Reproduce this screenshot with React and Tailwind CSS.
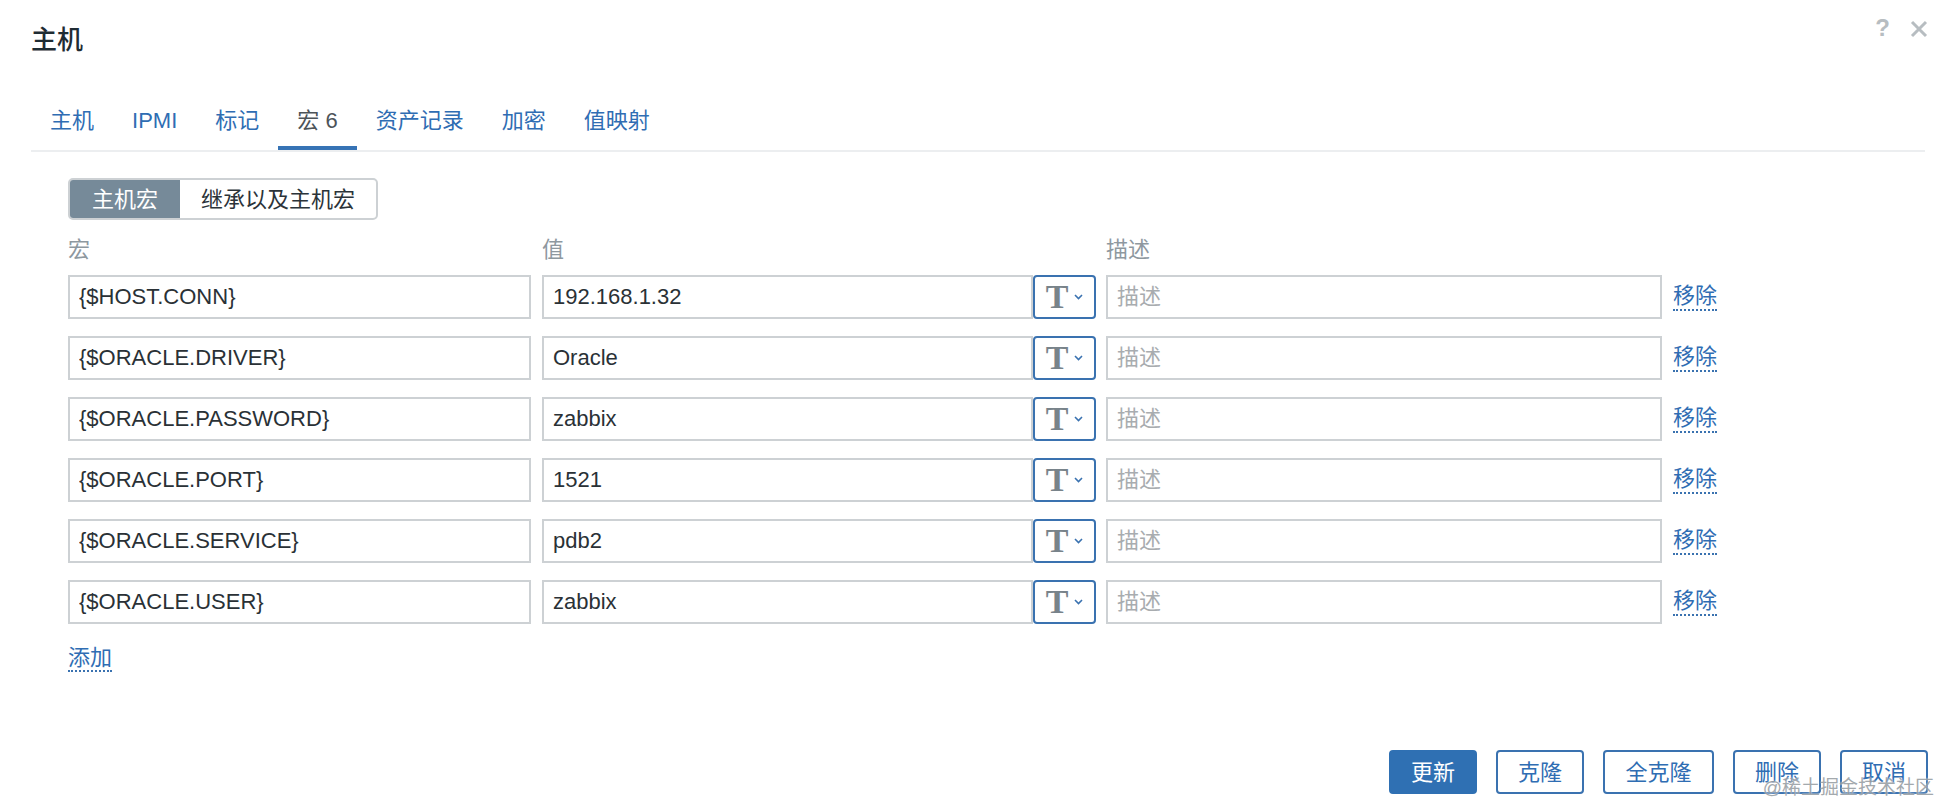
// Zabbix host edit dialog — macros tab
const tabs = [
  { label: "主机" },
  { label: "IPMI" },
  { label: "标记" },
  { label: "宏 6", active: true },
  { label: "资产记录" },
  { label: "加密" },
  { label: "值映射" },
];

const macros = [
  { name: "{$HOST.CONN}", value: "192.168.1.32" },
  { name: "{$ORACLE.DRIVER}", value: "Oracle" },
  { name: "{$ORACLE.PASSWORD}", value: "zabbix" },
  { name: "{$ORACLE.PORT}", value: "1521" },
  { name: "{$ORACLE.SERVICE}", value: "pdb2" },
  { name: "{$ORACLE.USER}", value: "zabbix" },
];

const buttons = [
  { label: "更新", primary: true, w: "w-[88px]" },
  { label: "克隆", w: "w-[88px]" },
  { label: "全克隆", w: "w-[111px]" },
  { label: "删除", w: "w-[88px]" },
  { label: "取消", w: "w-[88px]" },
];

const inputCls =
  "h-[44px] border-2 border-[#cdd1d4] bg-white px-[9px] text-[22px] text-[#2a3136] outline-none placeholder:text-[#a8acaf]";

const App = () => {
  return (
    <div className="relative min-h-screen bg-white font-['Liberation_Sans','Noto_Sans_CJK_SC',sans-serif] text-[#1f2c33]">
      {/* Header */}
      <div className="flex items-start justify-between pl-[31px] pr-[16px] pt-[25px]">
        <h1 className="text-[26px] font-medium leading-[30px]">主机</h1>
        <div className="-mt-[12px] flex items-center gap-[20px] text-[#b7bdc1]">
          <span className="text-[24px] font-bold leading-[30px]">?</span>
          <svg width="18" height="18" viewBox="0 0 18 18" className="mt-[2px]">
            <path d="M2 2 L16 16 M16 2 L2 16" stroke="#b7bdc1" strokeWidth="3" />
          </svg>
        </div>
      </div>

      {/* Tabs */}
      <div className="ml-[31px] mr-[19px] mt-[51px] flex border-b-2 border-[#eceef0]">
        {tabs.map((t) => (
          <div
            key={t.label}
            className={`border-b-4 px-[19px] pb-[10px] text-[22px] leading-[30px] ${
              t.active
                ? "border-[#3673b5] text-[#4d5459]"
                : "border-transparent text-[#2f6db3]"
            }`}
          >
            {t.label}
          </div>
        ))}
      </div>

      <div className="pl-[68px]">
        {/* Segmented toggle */}
        <div className="mt-[26px] flex h-[42px] w-[310px] overflow-hidden rounded-[5px] border-2 border-[#cdd1d4] text-[22px]">
          <div className="flex w-[110px] items-center justify-center bg-[#768a99] text-white">
            主机宏
          </div>
          <div className="flex flex-1 items-center justify-center text-[#2b3339]">
            继承以及主机宏
          </div>
        </div>

        {/* Column labels */}
        <div className="mt-[17px] flex text-[22px] leading-[26px] text-[#8e989f]">
          <div className="w-[474px]">宏</div>
          <div className="w-[564px]">值</div>
          <div>描述</div>
        </div>

        {/* Macro rows */}
        <div className="mt-[12px] flex flex-col gap-[17px]">
          {macros.map((m) => (
            <div key={m.name} className="flex items-center">
              <input className={`${inputCls} w-[463px]`} defaultValue={m.name} />
              <div className="ml-[11px] flex">
                <input className={`${inputCls} w-[491px]`} defaultValue={m.value} />
                <button className="flex h-[44px] w-[63px] items-center justify-center gap-[6px] rounded-[4px] border-2 border-[#3a72b0] bg-white">
                  <span className="font-['Liberation_Serif',serif] text-[34px] font-bold leading-none text-[#78838a]">
                    T
                  </span>
                  <svg width="9" height="6" viewBox="0 0 9 6">
                    <path d="M1 1 L4.5 4.5 L8 1" fill="none" stroke="#3a72b0" strokeWidth="1.6" />
                  </svg>
                </button>
              </div>
              <input className={`${inputCls} ml-[10px] w-[556px]`} placeholder="描述" />
              <span className="ml-[11px] border-b-2 border-dotted border-[#3a72b0] text-[22px] leading-[26px] text-[#2f6db3]">
                移除
              </span>
            </div>
          ))}
        </div>

        {/* Add */}
        <div className="mt-[21px]">
          <span className="border-b-2 border-dotted border-[#3a72b0] text-[22px] leading-[26px] text-[#2f6db3]">
            添加
          </span>
        </div>
      </div>

      {/* Footer buttons */}
      <div className="mt-[78px] flex justify-end gap-[19px] pr-[16px]">
        {buttons.map((b) => (
          <button
            key={b.label}
            className={`${b.w} h-[44px] rounded-[4px] border-2 text-[22px] ${
              b.primary
                ? "border-[#2f70b3] bg-[#2f70b3] text-white"
                : "border-[#3a72b0] bg-white text-[#2f6db3]"
            }`}
          >
            {b.label}
          </button>
        ))}
      </div>

      {/* Watermark */}
      <div className="absolute right-[10px] top-[774px] text-[19px] text-[#9aa0a5] opacity-90 [text-shadow:0_0_2px_#fff]">
        @稀土掘金技术社区
      </div>
    </div>
  );
};

export default App;
